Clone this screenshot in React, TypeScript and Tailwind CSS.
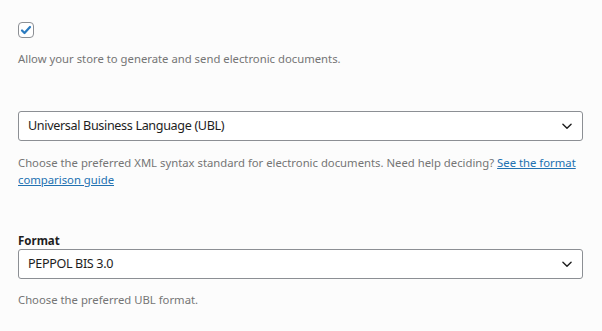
import React from "react";

const font = { fontFamily: '"Noto Sans", "Open Sans", sans-serif' };

function Chevron() {
  return (
    <svg width="14" height="14" viewBox="0 0 24 24" fill="none" stroke="#1e1e1e" strokeWidth="2.4" strokeLinecap="round" strokeLinejoin="round">
      <path d="M5 9l7 7 7-7" />
    </svg>
  );
}

function Select({ value }: { value: string }) {
  return (
    <div className="flex h-[30px] w-[565px] items-center justify-between rounded-[3px] border border-[#8c8f94] bg-white pl-[9px] pr-[8px]">
      <span className="text-[12.6px] tracking-[-0.35px] text-[#1e1e1e]">{value}</span>
      <Chevron />
    </div>
  );
}

export default function App() {
  return (
    <div className="min-h-[331px] w-[602px] bg-[#fcfcfc] pl-[18px] pt-[22px]" style={font}>
      <div className="flex h-[16px] w-[16px] items-center justify-center rounded-[4px] border border-[#8c8f94] bg-white">
        <svg width="12" height="12" viewBox="0 0 24 24" fill="none" stroke="#2b7bc0" strokeWidth="4.5" strokeLinecap="round" strokeLinejoin="round">
          <path d="M4 13l5 5L20 6" />
        </svg>
      </div>
      <p className="mt-[13px] text-[11.3px] leading-[16px] text-[#757575]">
        Allow your store to generate and send electronic documents.
      </p>
      <div className="mt-[44px]">
        <Select value="Universal Business Language (UBL)" />
      </div>
      <p className="mt-[13px] w-[565px] text-[11.3px] leading-[17px] text-[#757575]">
        Choose the preferred XML syntax standard for electronic documents. Need help deciding?{" "}
        <a className="text-[#2271b1] underline">See the format comparison guide</a>
      </p>
      <div className="mt-[46px] text-[11.5px] font-bold leading-[14px] text-[#1e1e1e]">Format</div>
      <div className="mt-[1px]">
        <Select value="PEPPOL BIS 3.0" />
      </div>
      <p className="mt-[13px] text-[11.3px] leading-[16px] text-[#757575]">
        Choose the preferred UBL format.
      </p>
    </div>
  );
}
